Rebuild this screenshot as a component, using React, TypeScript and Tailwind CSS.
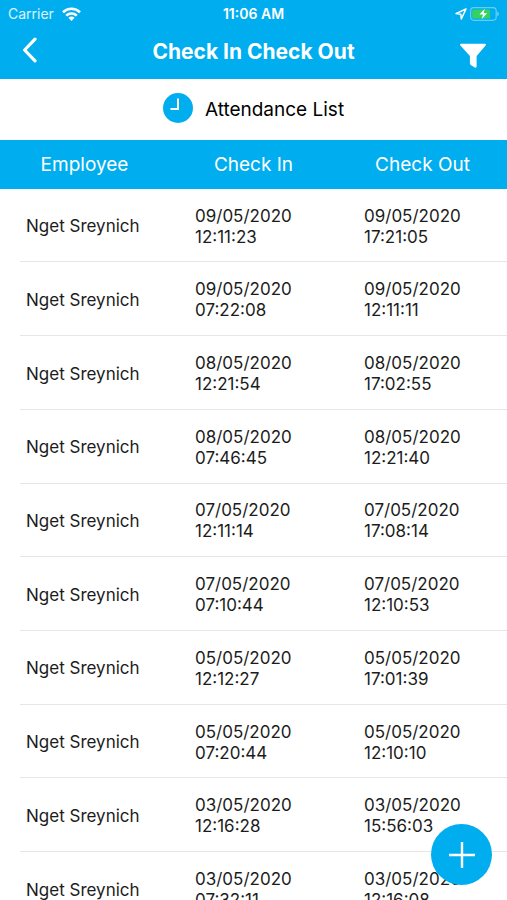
import type { ReactNode } from 'react';

interface AttendanceRecord {
  employee: string;
  checkIn: [string, string];
  checkOut: [string, string];
}

const records: AttendanceRecord[] = [
  { employee: 'Nget Sreynich', checkIn: ['09/05/2020', '12:11:23'], checkOut: ['09/05/2020', '17:21:05'] },
  { employee: 'Nget Sreynich', checkIn: ['09/05/2020', '07:22:08'], checkOut: ['09/05/2020', '12:11:11'] },
  { employee: 'Nget Sreynich', checkIn: ['08/05/2020', '12:21:54'], checkOut: ['08/05/2020', '17:02:55'] },
  { employee: 'Nget Sreynich', checkIn: ['08/05/2020', '07:46:45'], checkOut: ['08/05/2020', '12:21:40'] },
  { employee: 'Nget Sreynich', checkIn: ['07/05/2020', '12:11:14'], checkOut: ['07/05/2020', '17:08:14'] },
  { employee: 'Nget Sreynich', checkIn: ['07/05/2020', '07:10:44'], checkOut: ['07/05/2020', '12:10:53'] },
  { employee: 'Nget Sreynich', checkIn: ['05/05/2020', '12:12:27'], checkOut: ['05/05/2020', '17:01:39'] },
  { employee: 'Nget Sreynich', checkIn: ['05/05/2020', '07:20:44'], checkOut: ['05/05/2020', '12:10:10'] },
  { employee: 'Nget Sreynich', checkIn: ['03/05/2020', '12:16:28'], checkOut: ['03/05/2020', '15:56:03'] },
  { employee: 'Nget Sreynich', checkIn: ['03/05/2020', '07:32:11'], checkOut: ['03/05/2020', '12:16:08'] },
];

export default function App() {
  return (
    <div className="relative flex h-screen flex-col overflow-hidden bg-white font-['Inter',sans-serif] text-[#1c1c1c]">
      <header className="bg-[#00aeef] text-white">
        <StatusBar />
        <NavBar />
      </header>

      <main className="min-h-0 flex-1 overflow-y-auto [scrollbar-width:none]">
        <div className="flex items-center justify-center gap-3 pt-3 pb-4">
          <ClockIcon />
          <h2 className="pt-1 text-[19px] leading-[29px] text-black">Attendance List</h2>
        </div>
        <AttendanceTable />
      </main>

      <button
        type="button"
        aria-label="Add attendance"
        className="absolute right-[15px] bottom-[15px] flex size-[61px] items-center justify-center rounded-full bg-[#00aeef]"
      >
        <svg viewBox="0 0 26 26" className="size-[26px]" fill="none" stroke="white" strokeWidth="2.4">
          <path d="M13 0v26M0 13h26" />
        </svg>
      </button>
    </div>
  );
}

function StatusBar() {
  return (
    <div className="grid h-7 grid-cols-3 items-center px-2 text-[14px] leading-5">
      <div className="flex items-center gap-2">
        <span className="text-white/85">Carrier</span>
        <svg viewBox="0 0 19 14" className="h-[14px] w-[19px]" fill="none" stroke="white" strokeWidth="2.6">
          <path d="M1 5.2C5.8 .6 13.2 .6 18 5.2" />
          <path d="M4.2 8.6C7.2 5.8 11.8 5.8 14.8 8.6" />
          <path d="M9.5 14 6.4 10.8C8.2 9.2 10.8 9.2 12.6 10.8Z" fill="white" stroke="none" />
        </svg>
      </div>
      <span className="text-center font-semibold">11:06 AM</span>
      <div className="flex items-center justify-end gap-0.5">
        <svg viewBox="0 0 12 12" className="size-3" fill="none" stroke="white" strokeWidth="1.5" strokeLinejoin="round">
          <path d="M11 1 1 5.6l4.8.6.5 4.8Z" />
        </svg>
        <svg viewBox="0 0 30 14" className="h-[14px] w-[30px]" fill="none">
          <rect x="1.6" y=".7" width="25.6" height="12.6" rx="3.2" stroke="white" strokeOpacity=".4" strokeWidth="1.2" />
          <rect x="3.2" y="2.4" width="18" height="9.2" rx="1.6" fill="#34d163" />
          <path d="M28.4 4.8c1.8.7 1.8 3.7 0 4.4Z" fill="white" fillOpacity=".5" />
          <path d="m15.8 1.8-5.4 5.8h3.6l-1.4 4.6 5.6-6h-3.6Z" fill="white" />
        </svg>
      </div>
    </div>
  );
}

function NavBar() {
  return (
    <div className="flex h-[51px] items-center justify-between px-5 pb-1">
      <button type="button" aria-label="Back" className="flex w-7 justify-start pb-1">
        <svg viewBox="0 0 18 26" className="h-[26px] w-[18px]" fill="none" stroke="white" strokeWidth="3.2" strokeLinecap="round" strokeLinejoin="round">
          <path d="M15 2.2 4.6 13 15 23.8" />
        </svg>
      </button>
      <h1 className="text-[21px] leading-7 font-bold">Check In Check Out</h1>
      <button type="button" aria-label="Filter" className="flex w-7 justify-end pt-2">
        <svg viewBox="0 0 28 26" className="h-[26px] w-7" fill="white">
          <path d="M2 .7h24c1.1 0 1.3 1.1.6 1.9L17.6 13v10.6c0 1-1 1.4-1.8.9l-4-2.6c-.6-.4-.9-.9-.9-1.6V13L1.4 2.6C.7 1.8.9.7 2 .7Z" />
        </svg>
      </button>
    </div>
  );
}

function AttendanceTable() {
  return (
    <table className="h-[786px] w-full table-fixed">
      {/* the narrow first column keeps the row dividers off the left edge */}
      <colgroup>
        <col className="w-5" />
        <col />
        <col className="w-1/3" />
        <col className="w-1/3" />
      </colgroup>
      <thead>
        <tr className="h-[49px] bg-[#00aeef] text-[19px] leading-7 text-white">
          <HeadCell colSpan={2}>Employee</HeadCell>
          <HeadCell>Check In</HeadCell>
          <HeadCell>Check Out</HeadCell>
        </tr>
      </thead>
      <tbody className="text-[17px] leading-[21px]">
        {records.map((record, i) => (
          <tr key={i}>
            <td />
            <td className="border-b border-[#e6e6e6] pt-[3px] pl-[6px]">{record.employee}</td>
            <TimeCell value={record.checkIn} />
            <TimeCell value={record.checkOut} />
          </tr>
        ))}
      </tbody>
    </table>
  );
}

function HeadCell({ children, colSpan }: { children: ReactNode; colSpan?: number }) {
  return (
    <th scope="col" colSpan={colSpan} className="font-normal">
      {children}
    </th>
  );
}

function TimeCell({ value: [date, time] }: { value: [string, string] }) {
  return (
    <td className="border-b border-[#e6e6e6] pt-[3px] pl-[26px]">
      {date}
      <br />
      {time}
    </td>
  );
}

function ClockIcon() {
  return (
    <svg viewBox="0 0 30 30" className="size-[30px]">
      <circle cx="15" cy="15" r="15" fill="#00aeef" />
      <path d="M15 5.5V16H7.5" fill="none" stroke="white" strokeWidth="2" />
    </svg>
  );
}
